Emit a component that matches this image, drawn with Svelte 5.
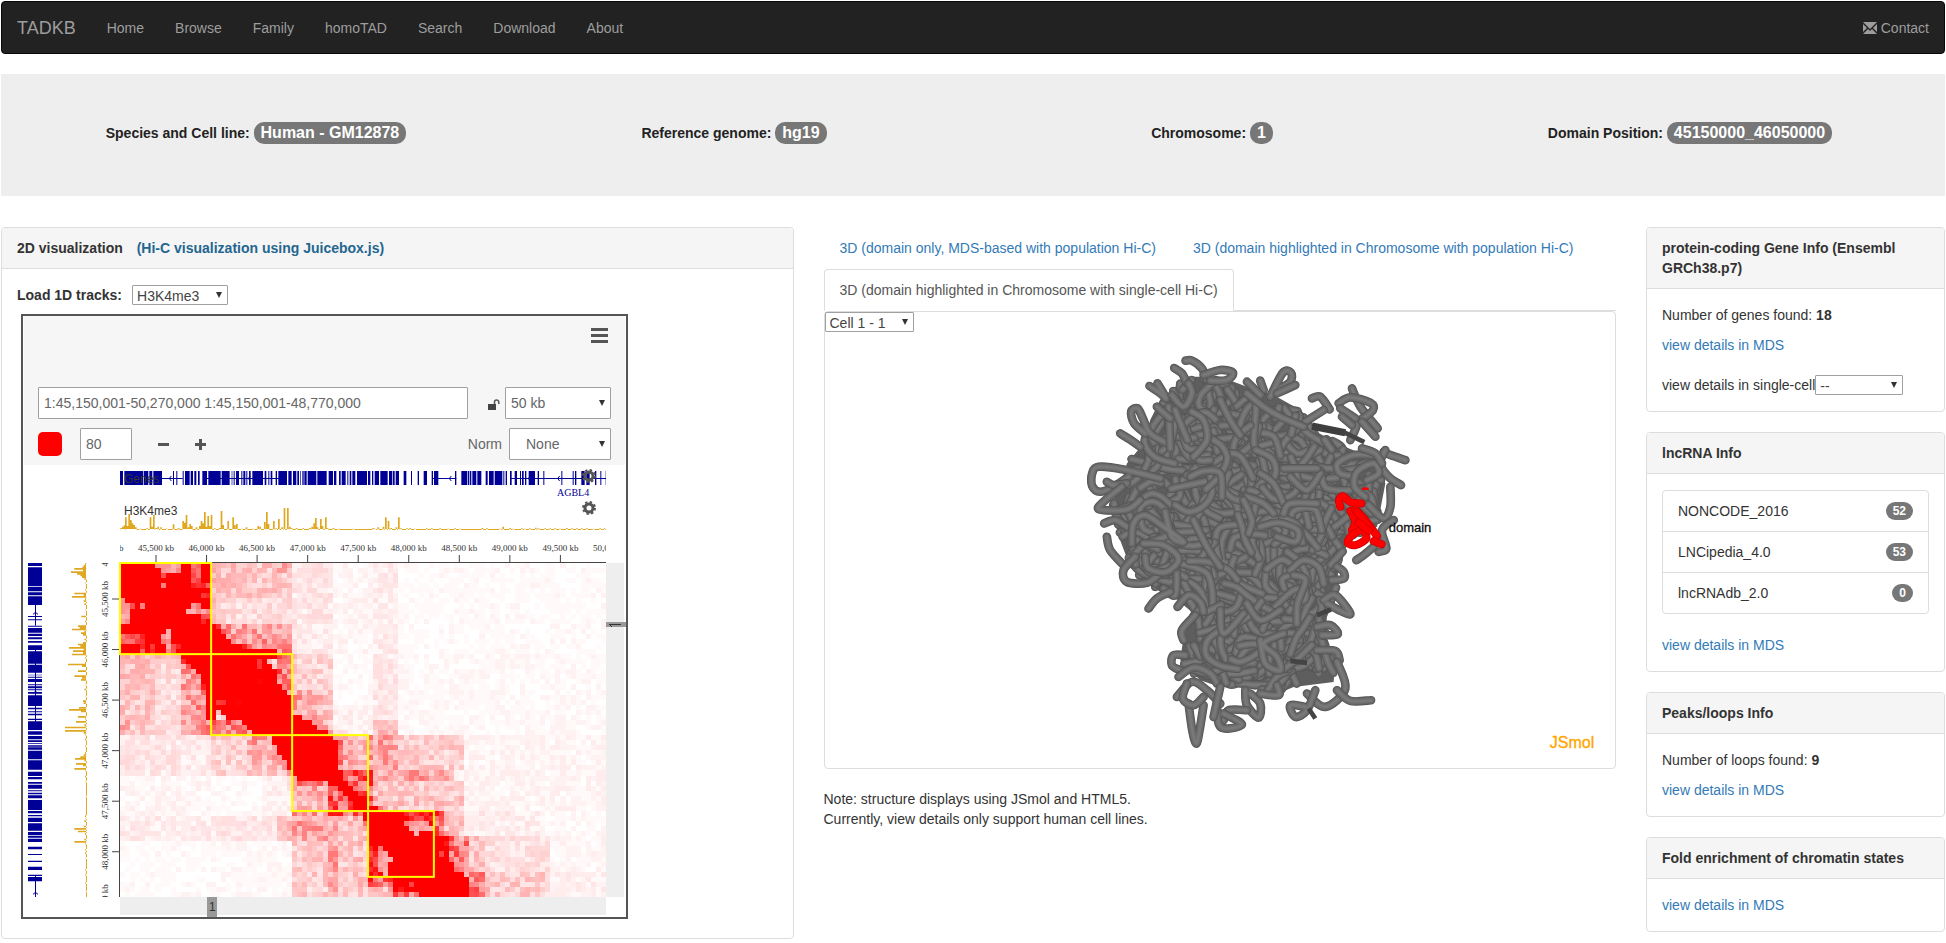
<script lang="ts">
  type point = [number, number];

  const menu = ["Home", "Browse", "Family", "homoTAD", "Search", "Download", "About"];
  const summary = [
    { label: "Species and Cell line:", value: "Human - GM12878" },
    { label: "Reference genome:", value: "hg19" },
    { label: "Chromosome:", value: "1" },
    { label: "Domain Position:", value: "45150000_46050000" }
  ];
  const lncrna = [
    { name: "NONCODE_2016", count: 52 },
    { name: "LNCipedia_4.0", count: 53 },
    { name: "lncRNAdb_2.0", count: 0 }
  ];

  let track = "H3K4me3";
  let locus = "1:45,150,001-50,270,000 1:45,150,001-48,770,000";
  let threshold = "80";

  function random(seed: number) {
    let s = seed;
    return () => {
      s = (s * 1664525 + 1013904223) % 4294967296;
      return s / 4294967296;
    };
  }

  // contact map, one cell is a 50 kb bin
  const cols = 96;
  const rows = 66;
  const bin = 486 / cols;
  const domains = [[0, 18], [18, 34], [34, 49], [49, 62]];

  // last saturated column for each row
  const reach = [
    17, 17, 17, 17, 17, 17, 17, 17, 17, 17, 17, 17, 18, 19, 20, 21, 23, 30,
    30, 28, 29, 30, 30, 30, 31, 32, 33, 33, 33, 33, 35, 37, 38, 40,
    41, 42, 42, 42, 42, 42, 42, 43, 43, 44, 45, 46, 48, 48, 50,
    61, 61, 61, 61, 61, 64, 64, 64, 64, 64, 65, 65, 67, 68, 68, 68, 68
  ];

  // softer spots inside the domains: row, column, height, width, level
  const spots = [
    [0, 7, 1, 5, 0.4], [1, 8, 1, 4, 0.4], [2, 8, 1, 1, 0.6], [4, 8, 1, 1, 0.6], [4, 14, 1, 4, 0.75],
    [0, 14, 4, 2, 0.6], [6, 16, 1, 2, 0.85], [8, 14, 1, 2, 0.5], [9, 13, 1, 5, 0.4], [10, 16, 2, 2, 0.8],
    [8, 0, 2, 2, 0.35], [19, 27, 2, 1, 0.65], [23, 27, 1, 1, 0.85], [49, 56, 1, 5, 0.9], [50, 57, 1, 5, 0.75],
    [51, 56, 1, 2, 0.55], [51, 58, 1, 3, 0.35], [52, 57, 1, 5, 0.3], [53, 58, 1, 1, 0.35],
    [57, 63, 1, 1, 0.75], [55, 64, 1, 1, 0.8], [63, 57, 1, 1, 0.8]
  ];

  // faint areas away from the diagonal: rows, columns, level
  const areas = [
    [0, 6, 18, 29, 0.22], [0, 1, 30, 33, 0.36], [2, 6, 30, 33, 0.22], [7, 11, 18, 33, 0.13],
    [12, 14, 18, 33, 0.36], [15, 17, 18, 33, 0.42], [0, 11, 34, 41, 0.1], [12, 17, 34, 41, 0.08],
    [0, 17, 42, 49, 0.04], [0, 17, 50, 54, 0.07], [0, 17, 55, 95, 0.02],
    [18, 24, 31, 33, 0.4], [18, 24, 34, 41, 0.16], [25, 33, 34, 41, 0.26], [18, 27, 42, 49, 0.02],
    [18, 30, 50, 54, 0.09], [28, 33, 42, 49, 0.06], [31, 33, 50, 54, 0.24], [18, 33, 55, 95, 0.025],
    [34, 40, 43, 48, 0.28], [34, 40, 49, 54, 0.38], [34, 40, 55, 67, 0.2], [41, 42, 50, 65, 0.36],
    [41, 45, 44, 49, 0.6], [41, 48, 50, 54, 0.24], [43, 48, 55, 67, 0.22], [34, 48, 49, 50, 0.5], [34, 48, 68, 95, 0.045],
    [49, 53, 62, 63, 0.45], [49, 53, 64, 67, 0.22], [49, 53, 68, 82, 0.07], [49, 53, 83, 95, 0.03],
    [54, 60, 65, 68, 0.45], [54, 60, 69, 71, 0.2], [54, 60, 72, 84, 0.12], [54, 60, 85, 95, 0.04],
    [61, 65, 69, 71, 0.4], [61, 65, 72, 84, 0.2], [61, 65, 85, 95, 0.06]
  ];

  function level(r: number, c: number, noise: number) {
    const i = Math.min(r, c);
    const j = Math.max(r, c);
    const spot = spots.find((s) => i >= s[0] && i < s[0] + s[2] && j >= s[1] && j < s[1] + s[3]);
    if (spot) return Math.min(1, spot[4] * (0.75 + noise * 0.5));
    const mirrored = spots.find((s) => j >= s[0] && j < s[0] + s[2] && i >= s[1] && i < s[1] + s[3]);
    if (mirrored) return Math.min(1, mirrored[4] * (0.75 + noise * 0.5));
    const gap = j - reach[i];
    if (gap <= 0) return 1;
    const area = areas.find((a) => i >= a[0] && i <= a[1] && j >= a[2] && j <= a[3]);
    const base = (area ? area[4] : 0.04) + 0.35 * Math.exp(-gap / 1.6) * (i < 12 ? 0.4 : 1);
    return Math.max(0, Math.min(1, base * (0.5 + noise) + (noise - 0.55) * 0.03));
  }

  // cells are collected in one path per shade
  const shades = 40;
  const cells: string[] = Array(shades + 1).fill("");
  const mapNoise = random(71);
  const half: number[][] = [];
  for (let i = 0; i < rows; i++) {
    half.push([]);
    for (let j = 0; j < cols; j++) {
      half[i].push(j < i ? half[j][i] : mapNoise());
      const l = Math.round(level(i, j, half[i][j]) * shades);
      if (l > 0) cells[l] += `M${j} ${i}h1v1h-1z`;
    }
  }

  function shade(l: number) {
    const v = Math.round(255 * (1 - l / shades));
    return `rgb(255, ${v}, ${v})`;
  }

  // gene blocks: start and end, thirds of a pixel
  const genes = [
    0, 9, 13, 69, 71, 85, 88, 97, 100, 126, 159, 162, 169, 172, 188, 191, 195, 209, 212, 219, 223, 229, 234, 239,
    247, 261, 265, 302, 305, 329, 335, 337, 341, 344, 348, 357, 364, 367, 370, 376, 379, 382, 387, 392, 397, 429,
    434, 439, 445, 448, 452, 457, 467, 471, 475, 501, 505, 515, 519, 529, 532, 537, 541, 543, 547, 551, 553, 560,
    563, 589, 592, 620, 626, 639, 642, 649, 657, 662, 665, 677, 682, 685, 689, 694, 697, 706, 711, 741, 744, 751,
    756, 760, 764, 777, 781, 803, 807, 817, 819, 824, 827, 837, 851, 859, 873, 876, 893, 897, 911, 921, 935, 939,
    942, 955, 1005, 1009, 1024, 1041, 1043, 1047, 1049, 1054, 1057, 1069, 1072, 1084, 1097, 1103, 1107, 1121,
    1124, 1147, 1150, 1153, 1157, 1161, 1170, 1175, 1184, 1191, 1200, 1203, 1206, 1211, 1215, 1219, 1226, 1245,
    1253, 1257, 1270, 1273, 1324, 1327, 1358, 1361, 1365, 1369, 1384, 1394, 1399, 1409, 1425, 1429, 1441, 1444,
    1457, 1460
  ];
  let genePath = "";
  for (let i = 0; i < genes.length; i += 2) {
    genePath += `M${genes[i] / 3} 0h${(genes[i + 1] - genes[i]) / 3}v14h${(genes[i] - genes[i + 1]) / 3}z`;
  }
  // introns without exons
  const introns = [[126, 188], [255, 480], [939, 1009], [1170, 1460]];
  const arrows = [148, 385, 988, 1225, 1313, 1400];

  // signal peaks: position and height, thirds of a pixel
  const peaks = [
    3, 6, 8, 10, 13, 14, 17, 38, 22, 12, 27, 48, 32, 30, 37, 20, 42, 15, 47, 8, 60, 4, 80, 5, 91, 38, 96, 10, 101, 45,
    108, 6, 114, 10, 123, 8, 140, 4, 160, 17, 175, 6, 189, 27, 194, 22, 199, 45, 205, 8, 210, 18, 215, 12, 229, 8,
    239, 12, 244, 27, 249, 20, 254, 54, 259, 10, 264, 42, 269, 12, 274, 45, 284, 5, 299, 6, 304, 57, 309, 15, 324, 27,
    339, 38, 344, 15, 350, 18, 365, 4, 379, 8, 400, 4, 414, 12, 420, 10, 434, 24, 440, 54, 445, 18, 461, 27, 468, 5,
    476, 33, 486, 8, 493, 66, 503, 66, 509, 10, 515, 5, 529, 6, 549, 5, 569, 6, 576, 10, 582, 20, 587, 36, 592, 8,
    602, 33, 607, 12, 617, 38, 622, 5, 640, 6, 655, 4, 700, 4, 759, 6, 765, 4, 774, 8, 790, 10, 797, 38, 805, 27,
    813, 6, 829, 8, 836, 38, 842, 5, 860, 5, 870, 6, 885, 4, 920, 5, 935, 5, 960, 5, 985, 4, 1005, 5, 1020, 4, 1087, 6,
    1100, 5, 1140, 4, 1149, 10, 1170, 6, 1180, 4, 1205, 5, 1215, 4, 1230, 5, 1247, 7, 1255, 5, 1275, 5, 1290, 5,
    1305, 5, 1320, 4, 1340, 6, 1355, 5, 1370, 5, 1385, 5, 1400, 5, 1420, 4, 1440, 5, 1453, 5
  ];
  let peakPath = "M0 0h486v-1H0z";
  for (let i = 0; i < peaks.length; i += 2) {
    peakPath += `M${(peaks[i] - 2) / 3} 0v${-peaks[i + 1] / 3}h1.7v${peaks[i + 1] / 3}z`;
  }

  const ticks = [...Array(11).keys()].map((i) => ({
    at: 36 + (i - 1) * 50.55,
    text: (45 + i * 0.5).toFixed(1).replace(".", ",") + "00 kb"
  }));
  const sideTicks = ticks.filter((tick) => tick.at < 350);

  // chromosome model
  const outline: point[] = [
    [300, 180], [380, 110], [480, 110], [560, 140], [640, 165], [720, 210], [760, 270], [830, 310], [890, 335],
    [950, 360], [975, 430], [950, 560], [870, 600], [835, 660], [830, 760], [800, 830], [790, 930], [825, 960],
    [820, 1025], [700, 1040], [640, 1065], [560, 1030], [480, 1040], [420, 1020], [360, 960], [370, 890], [400, 820],
    [340, 770], [260, 730], [210, 680], [180, 600], [150, 500], [180, 440], [200, 370], [250, 310], [270, 240]
  ];

  const loops: point[][] = [
    [[376, 62], [395, 62], [425, 85], [440, 120]],
    [[342, 84], [365, 100], [380, 130]],
    [[430, 105], [480, 90], [518, 98], [500, 120], [450, 122]],
    [[268, 138], [300, 160], [318, 175], [292, 130]],
    [[385, 130], [395, 160], [370, 200], [335, 165]],
    [[255, 280], [222, 250], [213, 215], [232, 205], [248, 235], [270, 280], [325, 312]],
    [[180, 280], [212, 300], [240, 320]],
    [[325, 200], [330, 325]],
    [[345, 210], [365, 260], [382, 300]],
    [[300, 415], [190, 388], [115, 380], [96, 400], [96, 438], [120, 455], [160, 440], [205, 410]],
    [[140, 425], [160, 435], [200, 430]],
    [[185, 440], [130, 485], [118, 508], [200, 508], [240, 480]],
    [[132, 550], [165, 540], [200, 560]],
    [[140, 590], [150, 630], [190, 675]],
    [[225, 650], [190, 690], [200, 725], [260, 728], [300, 700]],
    [[215, 610], [220, 550], [255, 525], [310, 560], [370, 605], [335, 590], [315, 515]],
    [[255, 650], [265, 685], [320, 695], [355, 655], [310, 615], [250, 610]],
    [[350, 700], [345, 765], [310, 745]],
    [[265, 805], [290, 775], [330, 755]],
    [[352, 800], [385, 765], [420, 785], [430, 815]],
    [[290, 200], [330, 235]],
    [[630, 170], [668, 98], [692, 98], [690, 125], [650, 150]],
    [[705, 135], [650, 160]],
    [[600, 122], [610, 150]],
    [[560, 125], [600, 165]],
    [[755, 175], [780, 170], [808, 208]],
    [[735, 245], [790, 210]],
    [[875, 145], [900, 200], [952, 265]],
    [[835, 190], [870, 172], [930, 188], [938, 210], [900, 240]],
    [[850, 215], [890, 245], [870, 300]],
    [[945, 290], [905, 245]],
    [[840, 205], [885, 235]],
    [[845, 230], [875, 255]],
    [[970, 335], [990, 345], [1035, 360]],
    [[975, 330], [960, 370], [985, 410], [1022, 435]],
    [[940, 345], [880, 345], [832, 370], [840, 400], [880, 408]],
    [[915, 470], [883, 440], [890, 395], [940, 370], [955, 400], [920, 420]],
    [[905, 325], [945, 340], [965, 370]],
    [[990, 440], [990, 500], [970, 535], [925, 495]],
    [[1000, 540], [965, 570], [978, 625], [955, 635]],
    [[888, 660], [910, 645], [940, 620]],
    [[830, 680], [850, 695], [850, 715], [815, 720]],
    [[790, 780], [825, 765], [870, 820], [840, 812], [800, 790]],
    [[770, 860], [810, 855], [832, 882], [785, 885]],
    [[770, 930], [825, 932], [838, 960]],
    [[830, 965], [855, 1045], [795, 1100], [740, 1060]],
    [[830, 1050], [870, 1082], [932, 1080]],
    [[765, 1050], [740, 1110], [705, 1130], [690, 1095], [735, 1100]],
    [[555, 1050], [560, 1095], [595, 1132], [600, 1090], [570, 1060]],
    [[560, 1110], [505, 1110], [490, 1140]],
    [[470, 1080], [475, 1150], [500, 1165], [545, 1152], [490, 1120]],
    [[385, 1090], [396, 1170], [408, 1210], [418, 1170], [430, 1095]],
    [[350, 1070], [395, 1025], [440, 1050], [480, 1090]],
    [[375, 945], [340, 945], [335, 975], [360, 990]],
    [[355, 1010], [400, 982], [450, 1000], [470, 1030]],
    [[380, 1030], [368, 1075], [400, 1095], [430, 1070]],
    [[480, 1040], [460, 1130]],
    [[405, 825], [365, 870], [370, 900]],
    [[390, 410], [430, 393], [480, 400], [485, 470]],
    [[400, 350], [440, 300], [430, 240], [395, 215]],
    [[480, 180], [510, 240], [540, 285]],
    [[560, 160], [610, 200], [660, 230], [730, 260]],
    [[400, 540], [440, 620], [480, 680]],
    [[560, 470], [610, 490], [640, 520]],
    [[600, 400], [640, 430], [670, 490]],
    [[690, 410], [740, 450], [780, 400]],
    [[670, 520], [690, 490], [770, 490]],
    [[670, 385], [770, 385]],
    [[600, 560], [655, 548], [712, 570], [705, 605], [650, 590]],
    [[690, 690], [730, 660], [775, 680], [790, 730]],
    [[710, 850], [712, 790], [735, 720], [700, 705]],
    [[660, 810], [600, 840], [560, 790]],
    [[480, 810], [490, 880], [550, 820]],
    [[600, 900], [615, 970], [660, 990], [650, 950], [610, 910], [670, 880]],
    [[600, 1060], [655, 1065], [650, 1035]],
    [[565, 580], [575, 540], [550, 480]]
  ];

  const domainLoops: point[][] = [
    [[903, 490], [870, 486], [848, 468], [836, 480], [840, 500]],
    [[870, 512], [885, 545], [875, 570]],
    [[885, 508], [915, 540], [950, 588]],
    [[890, 515], [905, 535], [930, 565]],
    [[870, 590], [862, 608], [885, 615], [918, 595], [905, 570], [875, 585]],
    [[895, 548], [925, 572]],
    [[940, 603], [964, 612]]
  ];

  // smooth line through all the points
  function curve(p: point[]) {
    let d = `M${p[0][0]} ${p[0][1]}`;
    for (let i = 0; i < p.length - 1; i++) {
      const a = p[i - 1] ?? p[i];
      const b = p[i];
      const c = p[i + 1];
      const e = p[i + 2] ?? c;
      d += `C${b[0] + (c[0] - a[0]) / 6} ${b[1] + (c[1] - a[1]) / 6} `;
      d += `${c[0] - (e[0] - b[0]) / 6} ${c[1] - (e[1] - b[1]) / 6} ${c[0]} ${c[1]}`;
    }
    return d;
  }

  function inside(x: number, y: number) {
    let hit = false;
    for (let i = 0, j = outline.length - 1; i < outline.length; j = i++) {
      const [xi, yi] = outline[i];
      const [xj, yj] = outline[j];
      if (yi > y !== yj > y && x < ((xj - xi) * (y - yi)) / (yj - yi) + xi) hit = !hit;
    }
    return hit;
  }

  const rand = random(2019);
  const tubes: string[] = [];
  while (tubes.length < 460) {
    let x = 140 + rand() * 850;
    let y = 90 + rand() * 980;
    if (!inside(x, y)) continue;
    let angle = rand() * Math.PI * 2;
    const turn = (rand() - 0.5) * 2.2;
    const p: point[] = [[Math.round(x), Math.round(y)]];
    const steps = 2 + Math.floor(rand() * 4);
    for (let i = 0; i < steps; i++) {
      x += Math.cos(angle) * (26 + rand() * 40);
      y += Math.sin(angle) * (26 + rand() * 40);
      angle += turn + (rand() - 0.5) * 0.8;
      if (!inside(x, y)) break;
      p.push([Math.round(x), Math.round(y)]);
    }
    if (p.length > 1) tubes.push(curve(p));
  }
</script>

<div class="page">
  <nav class="navbar">
    <a class="brand" href="#top">TADKB</a>
    {#each menu as item}
      <a href="#{item}">{item}</a>
    {/each}
    <a class="contact" href="#contact">
      <svg width="14" height="12" viewBox="0 0 14 12" aria-hidden="true">
        <path d="M0 0H14L7 7Z M0 2L4 6L0 10Z M14 2L10 6L14 10Z M0 12L5 7L7 9L9 7L14 12Z" fill="#9d9d9d" />
      </svg>
      Contact
    </a>
  </nav>

  <header class="summary">
    {#each summary as item}
      <div>{item.label} <span class="badge large">{item.value}</span></div>
    {/each}
  </header>

  <main class="row">
    <div class="col">
      <section class="panel">
        <h3>2D visualization <a class="juicebox-link" href="#juicebox">(Hi-C visualization using Juicebox.js)</a></h3>
        <div class="body">
          <div class="tracks">
            <label for="track">Load 1D tracks:</label>
            <span class="select track">
              <select id="track" bind:value={track}><option>H3K4me3</option></select>
            </span>
          </div>
          <div class="juicebox">
            <div class="toolbar">
              <button class="menu" aria-label="Menu"><i></i><i></i><i></i></button>
              <div class="line">
                <input class="locus" aria-label="Locus" bind:value={locus} />
                <svg class="lock" width="12" height="11" viewBox="0 0 12 11" aria-hidden="true">
                  <path d="M0 5H8V11H0Z" fill="#444" />
                  <path d="M6.500 5V3Q6.500 1 8.500 1T10.800 3V5" fill="none" stroke="#555" stroke-width="1.500" />
                </svg>
                <span class="select resolution">
                  <select aria-label="Resolution"><option>50 kb</option></select>
                </span>
              </div>
              <div class="line">
                <button class="color" aria-label="Map colour"></button>
                <input class="threshold" aria-label="Threshold" bind:value={threshold} />
                <button class="step" aria-label="Decrease">
                  <svg width="11" height="11" viewBox="0 0 11 11"><path d="M0 4H11V7H0Z" fill="#555" /></svg>
                </button>
                <button class="step" aria-label="Increase">
                  <svg width="11" height="11" viewBox="0 0 11 11">
                    <path d="M0 4H4V0H7V4H11V7H7V11H4V7H0Z" fill="#555" />
                  </svg>
                </button>
                <label class="norm" for="norm">Norm</label>
                <span class="select normalization">
                  <select id="norm"><option>None</option></select>
                </span>
              </div>
            </div>

            <svg class="map" width="603" height="452" viewBox="0 0 603 452" role="img" aria-label="Hi-C contact map">
              <defs>
                <clipPath id="across"><rect x="0" y="-40" width="486" height="80" /></clipPath>
                <clipPath id="down"><rect x="0" y="-40" width="334" height="80" /></clipPath>
                <g id="genes">
                  <path d={genePath} fill="#000096" />
                  {#each introns as [from, to]}
                    <path d="M{from / 3} 7.5H{to / 3}" stroke="#000096" />
                  {/each}
                  {#each arrows as at}
                    <path d="M{at / 3 + 2} 5L{at / 3} 7.500L{at / 3 + 2} 10" fill="none" stroke="#000096" />
                  {/each}
                </g>
                <g id="gear">
                  <circle r="4" fill="none" stroke="#555" stroke-width="3" />
                  <circle r="6" fill="none" stroke="#555" stroke-width="2" stroke-dasharray="2.356 2.356" />
                </g>
              </defs>

              <g transform="translate(97 6)" clip-path="url(#across)">
                <use href="#genes" />
                <text class="name" x="4" y="12">Genes</text>
                <text class="gene" x="437" y="25">AGBL4</text>
              </g>
              <g transform="matrix(0 1 1 0 5 98)" clip-path="url(#down)"><use href="#genes" /></g>

              <g transform="translate(97 65)" clip-path="url(#across)">
                <path d={peakPath} fill="#e0a820" />
                <text class="name" x="4" y="-15">H3K4me3</text>
              </g>
              <g transform="matrix(0 1 1 0 64 98)" clip-path="url(#down)"><path d={peakPath} fill="#e0a820" /></g>
              <use href="#gear" x="566" y="11" />
              <use href="#gear" x="566" y="43" />

              <g transform="translate(97 97)" clip-path="url(#across)">
                <path d="M0 0.500H486" stroke="#444" />
                {#each ticks as tick}
                  <path d="M{tick.at} 0V-7" stroke="#444" />
                  <text class="tick" x={tick.at} y="-11">{tick.text}</text>
                {/each}
              </g>
              <svg x="70" y="98" width="27" height="334">
                <path d="M26.500 0V334" stroke="#444" />
                {#each sideTicks as tick}
                  <path d="M19 {tick.at}H26" stroke="#444" />
                  <text class="tick" transform="translate(15 {tick.at}) rotate(-90)">{tick.text}</text>
                {/each}
              </svg>

              <svg x="97" y="98" width="486" height="334" viewBox="0 0 96 66" preserveAspectRatio="none" shape-rendering="crispEdges">
                {#each cells as d, i}
                  {#if d}<path {d} fill={shade(i)} />{/if}
                {/each}
              </svg>
              <g transform="translate(97 98)">
                {#each domains as [from, to]}
                  <rect x={from * bin} y={from * bin} width={(to - from) * bin} height={(to - from) * bin} fill="none" stroke="#ff0" stroke-width="2" />
                {/each}
              </g>

              <path d="M583 98H601V432H583Z M97 432H583V450H97Z" fill="#eee" />
              <path d="M583 157H603V162H583Z M184 432H194V452H184Z" fill="#999" />
              <path d="M586 159.500H598M586 159L589 162" stroke="#333" fill="none" />
              <text class="name" x="186" y="446">1</text>
            </svg>
          </div>
        </div>
      </section>
    </div>

    <div class="col">
      <div class="tabs" role="tablist">
        <a href="#mds" role="tab" aria-selected="false">3D (domain only, MDS-based with population Hi-C)</a>
        <a href="#population" role="tab" aria-selected="false">3D (domain highlighted in Chromosome with population Hi-C)</a>
        <a href="#single" role="tab" aria-selected="true" class="active">3D (domain highlighted in Chromosome with single-cell Hi-C)</a>
      </div>
      <div class="viewer">
        <span class="select cell">
          <select aria-label="Cell"><option>Cell 1 - 1</option></select>
        </span>
        <svg viewBox="-705 -24 2370 1308" role="img" aria-label="Chromosome model">
          <path d="M{outline.map((p) => p.join(' ')).join('L')}Z" fill="#5e5e5e" />
          <g fill="none" stroke-linecap="round" stroke-linejoin="round">
            {#each [...tubes, ...loops.map(curve)] as d}
              <path {d} stroke="#555" stroke-width="26" />
              <path {d} stroke="#626262" stroke-width="22" />
              <path {d} stroke="#6c6c6c" stroke-width="17" />
              <path {d} stroke="#747474" stroke-width="11" />
              <path {d} stroke="#7a7a7a" stroke-width="5" />
            {/each}
            <path d="M755 258L855 278" stroke="#3e3e3e" stroke-width="22" stroke-linecap="butt" />
            <path d="M850 276L912 306M745 1105L765 1135M770 825L812 808M690 962L740 968" stroke="#444" stroke-width="14" stroke-linecap="butt" />
            {#each domainLoops.map(curve) as d}
              <path {d} stroke="#d00000" stroke-width="24" />
              <path {d} stroke="#f00" stroke-width="19" />
            {/each}
            <path d="M908 446H922" stroke="#f00" stroke-width="7" />
          </g>
          <text class="domain" x="985" y="577">domain</text>
          <text class="jsmol" x="1468" y="1222">JSmol</text>
        </svg>
      </div>
      <p class="note">
        Note: structure displays using JSmol and HTML5.<br />
        Currently, view details only support human cell lines.
      </p>
    </div>

    <div class="col">
      <section class="panel">
        <h3>protein-coding Gene Info (Ensembl GRCh38.p7)</h3>
        <div class="body">
          <p>Number of genes found: <b>18</b></p>
          <p><a href="#genes-mds">view details in MDS</a></p>
          <div class="single-cell">
            <label for="single">view details in single-cell</label>
            <span class="select single">
              <select id="single"><option>--</option></select>
            </span>
          </div>
        </div>
      </section>

      <section class="panel">
        <h3>lncRNA Info</h3>
        <div class="body">
          <ul>
            {#each lncrna as item}
              <li>{item.name}<span class="badge">{item.count}</span></li>
            {/each}
          </ul>
          <p><a href="#lncrna-mds">view details in MDS</a></p>
        </div>
      </section>

      <section class="panel">
        <h3>Peaks/loops Info</h3>
        <div class="body">
          <p>Number of loops found: <b>9</b></p>
          <p><a href="#loops-mds">view details in MDS</a></p>
        </div>
      </section>

      <section class="panel">
        <h3>Fold enrichment of chromatin states</h3>
        <div class="body">
          <p><a href="#states-mds">view details in MDS</a></p>
        </div>
      </section>
    </div>
  </main>
</div>

<style>
  :global(body) {
    margin: 0;
    background: #fff;
  }

  .page {
    padding: 1px;
    overflow: hidden;
    font-family: "Liberation Sans", Arial, sans-serif;
    font-size: 14px;
    line-height: 20px;
    color: #333;
  }

  .page :global(*) {
    box-sizing: border-box;
  }

  a {
    color: #337ab7;
    text-decoration: none;
  }

  button {
    padding: 0;
    border: 0;
    background: none;
  }

  .navbar {
    display: flex;
    align-items: center;
    gap: 1px;
    height: 53px;
    margin-bottom: 20px;
    border: 1px solid #080808;
    border-radius: 4px;
    background: #222;
  }

  .navbar a {
    padding: 0 15px;
    color: #9d9d9d;
  }

  .navbar .brand {
    font-size: 18px;
  }

  .navbar .contact {
    margin-left: auto;
  }

  .contact svg {
    vertical-align: -1px;
  }

  .summary {
    display: grid;
    grid-template-columns: repeat(4, 1fr);
    padding: 48px 16px 52px;
    margin-bottom: 31px;
    background: #eee;
    font-weight: bold;
    text-align: center;
    line-height: 22px;
    color: #222;
  }

  .badge {
    display: inline-block;
    padding: 3px 7px;
    border-radius: 10px;
    background: #777;
    color: #fff;
    font-size: 12px;
    font-weight: bold;
    line-height: 12px;
  }

  .badge.large {
    font-size: 16px;
    line-height: 16px;
  }

  .row {
    display: grid;
    grid-template-columns: minmax(0, 5fr) minmax(0, 5fr) minmax(0, 2fr);
    align-items: start;
    margin: 0 -15px;
  }

  .col {
    padding: 0 15px;
  }

  .panel {
    margin-bottom: 20px;
    border: 1px solid #ddd;
    border-radius: 4px;
  }

  .panel h3 {
    margin: 0;
    padding: 10px 15px;
    border-bottom: 1px solid #ddd;
    border-radius: 3px 3px 0 0;
    background: #f5f5f5;
    font-size: 14px;
    line-height: 20px;
  }

  .panel .juicebox-link {
    margin-left: 10px;
    color: #23668f;
  }

  .body {
    padding: 16px 15px;
  }

  .body p {
    margin: 0 0 10px;
  }

  .body p:last-child {
    margin-bottom: 0;
  }

  .select {
    position: relative;
    display: inline-flex;
    height: 20px;
  }

  .select::after {
    content: "";
    position: absolute;
    right: 6px;
    top: calc(50% - 3px);
    border: 3px solid transparent;
    border-top: 6px solid #333;
    border-bottom: 0;
    pointer-events: none;
  }

  select,
  input {
    width: 100%;
    margin: 0;
    padding: 0 4px;
    appearance: none;
    border: 1px solid #a0a0a0;
    border-radius: 1px;
    background: #fff;
    color: #444;
    font: inherit;
  }

  .tracks {
    display: flex;
    gap: 10px;
    align-items: center;
    margin-bottom: 9px;
    font-weight: bold;
  }

  .tracks select {
    font-weight: normal;
  }

  .track {
    width: 96px;
  }

  .juicebox {
    width: 607px;
    margin: 0 0 3px 4px;
    border: 2px solid #555;
  }

  .toolbar {
    display: flex;
    flex-direction: column;
    gap: 9px;
    height: 149px;
    margin: 0 1px;
    padding: 12px 14px 0;
    background: #f6f6f6;
  }

  .menu {
    display: flex;
    flex-direction: column;
    gap: 3px;
    align-self: flex-end;
    width: 17px;
    margin: 0 3px 35px 0;
  }

  .menu i {
    height: 3px;
    background: #555;
  }

  .line {
    display: flex;
    align-items: center;
    height: 32px;
  }

  .toolbar input,
  .toolbar select {
    height: 32px;
    padding: 0 5px;
    color: #666;
  }

  .toolbar .select {
    height: 32px;
  }

  .toolbar .locus {
    width: 430px;
  }

  .lock {
    margin: 2px 5px 0 auto;
  }

  .resolution {
    width: 106px;
  }

  .color {
    width: 24px;
    height: 24px;
    border-radius: 5px;
    background: #f00;
  }

  .toolbar .threshold {
    width: 52px;
    margin: 0 26px 0 18px;
  }

  .step {
    display: flex;
    margin-right: 26px;
  }

  .norm {
    margin-left: auto;
    margin-right: 7px;
    color: #666;
  }

  .normalization {
    width: 102px;
  }

  .toolbar .normalization select {
    padding-left: 16px;
  }

  .map {
    display: block;
  }

  .name {
    font-size: 12px;
    fill: #333;
  }

  .gene {
    font-family: "Liberation Serif", serif;
    font-size: 10px;
    fill: #000096;
  }

  .tick {
    font-family: "Liberation Serif", serif;
    font-size: 9px;
    text-anchor: middle;
    fill: #333;
  }

  .tabs {
    display: flex;
    flex-wrap: wrap;
    gap: 0 5px;
    border-bottom: 1px solid #ddd;
  }

  .tabs a {
    padding: 10px 15px;
    border: 1px solid transparent;
    border-radius: 4px 4px 0 0;
  }

  .tabs .active {
    margin-bottom: -1px;
    border-color: #ddd;
    border-bottom-color: #fff;
    color: #555;
  }

  .viewer {
    border: 1px solid #ddd;
    border-radius: 4px;
  }

  .viewer svg {
    display: block;
    width: 100%;
  }

  .cell {
    display: flex;
    width: 89px;
  }

  .domain {
    font-size: 39px;
    fill: #111;
    stroke: #111;
    stroke-width: 1px;
  }

  .jsmol {
    font-size: 48px;
    fill: #ffa500;
    stroke: #ffa500;
    stroke-width: 1px;
  }

  .note {
    margin: 20px 0 0;
  }

  .single-cell {
    display: flex;
    margin-top: 20px;
    white-space: nowrap;
  }

  .single {
    width: 88px;
  }

  ul {
    margin: 0 0 21px;
    padding: 0;
    border: 1px solid #ddd;
    border-radius: 4px;
    list-style: none;
  }

  li {
    display: flex;
    justify-content: space-between;
    align-items: center;
    padding: 10px 15px;
    border-bottom: 1px solid #ddd;
  }

  li:last-child {
    border-bottom: 0;
  }
</style>
